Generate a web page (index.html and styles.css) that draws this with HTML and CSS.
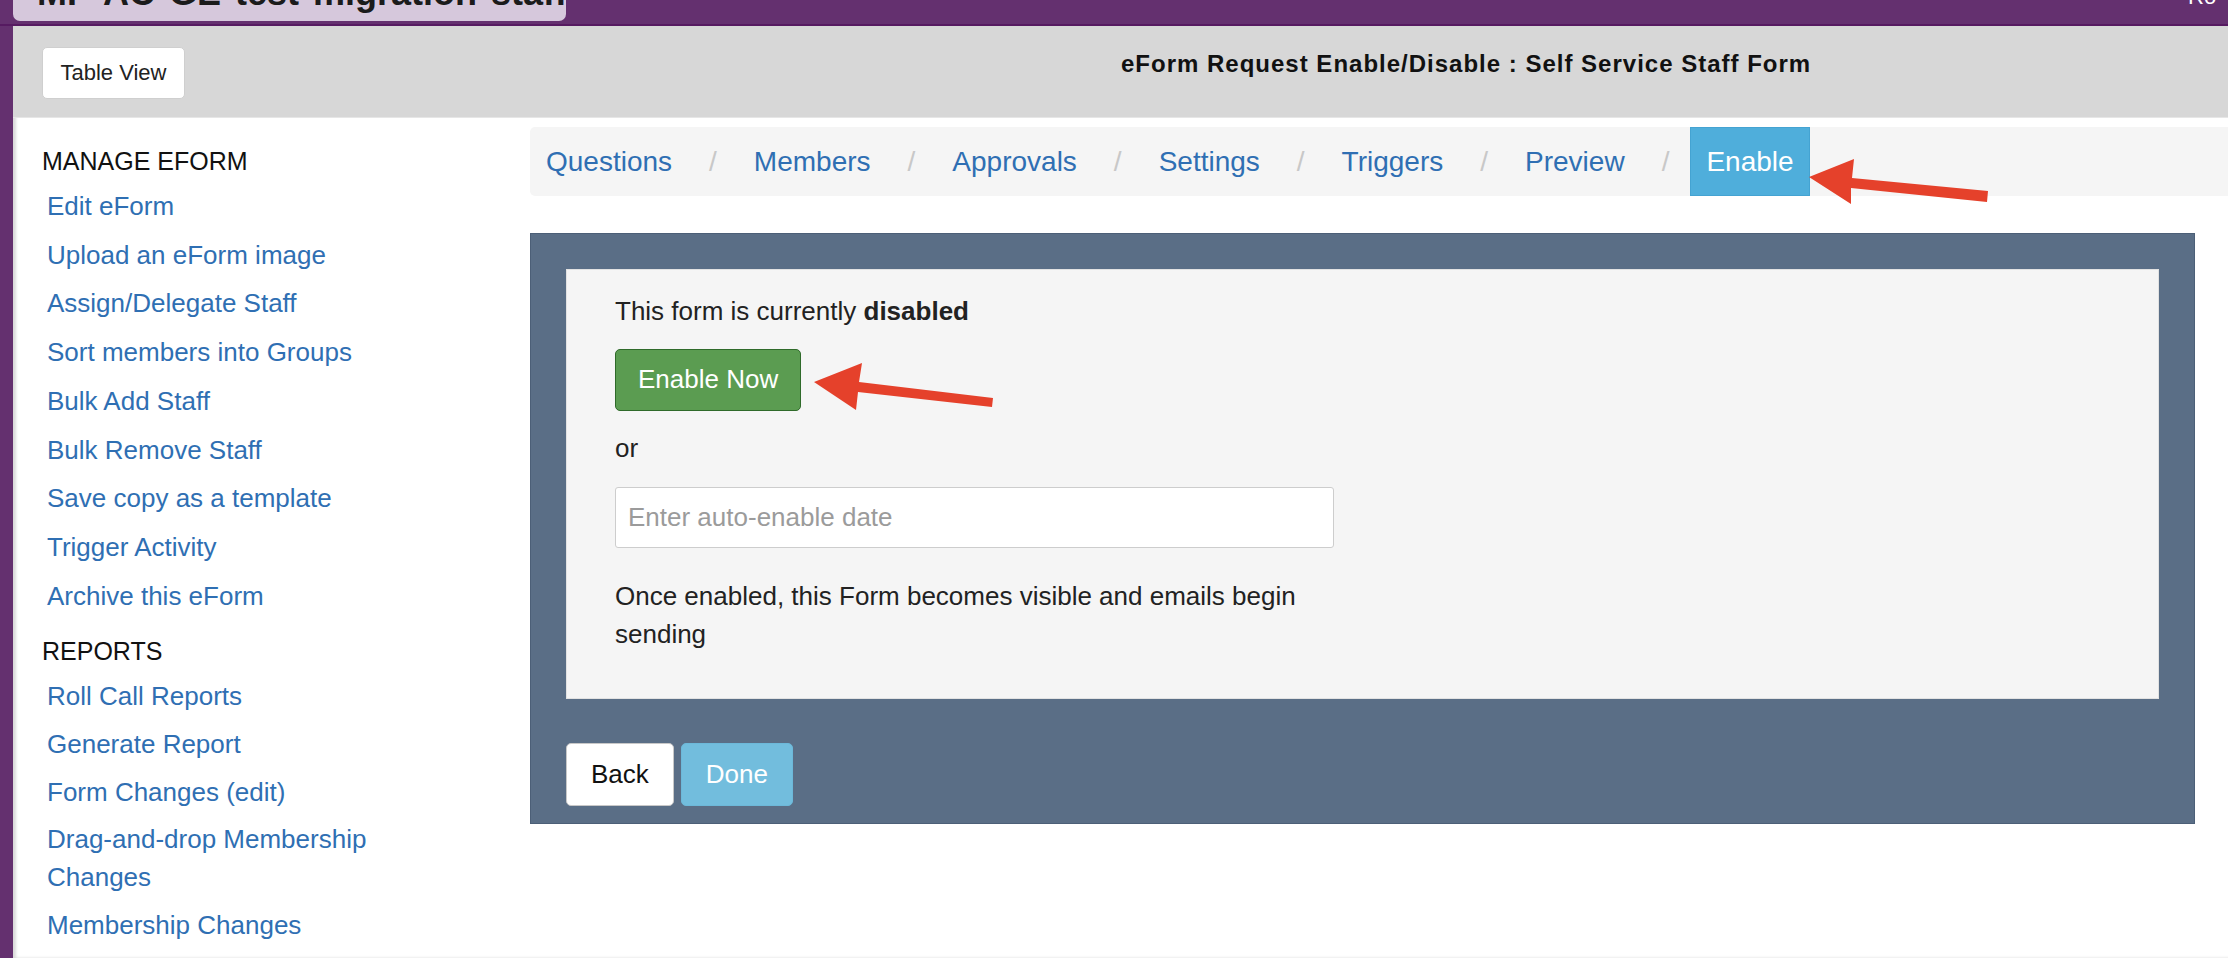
FILE: index.html
```html
<!DOCTYPE html>
<html lang="en">
<head>
    <meta charset="UTF-8">
    <meta name="viewport" content="width=device-width, initial-scale=1.0">
    <title>eForm Request Enable/Disable</title>
    <link rel="stylesheet" href="styles.css">
</head>
<body>
<div class="topbar">
  <div class="site-tab"><span>MP AC GE test migration staff</span></div>
  <div class="user-name"><span>Ro</span></div>
</div>
<div class="page">
  <div class="header">
    <button class="btn table-view">Table View</button>
    <h1 class="title">eForm Request Enable/Disable : Self Service Staff Form</h1>
  </div>
  <div class="content">
    <div class="sidebar">
      <h4>MANAGE EFORM</h4>
      <ul class="side-links">
        <li><a href="#">Edit eForm</a></li>
        <li><a href="#">Upload an eForm image</a></li>
        <li><a href="#">Assign/Delegate Staff</a></li>
        <li><a href="#">Sort members into Groups</a></li>
        <li><a href="#">Bulk Add Staff</a></li>
        <li><a href="#">Bulk Remove Staff</a></li>
        <li><a href="#">Save copy as a template</a></li>
        <li><a href="#">Trigger Activity</a></li>
        <li><a href="#">Archive this eForm</a></li>
      </ul>
      <h4 class="reports">REPORTS</h4>
      <ul class="side-links report-links">
        <li><a href="#">Roll Call Reports</a></li>
        <li><a href="#">Generate Report</a></li>
        <li><a href="#">Form Changes (edit)</a></li>
        <li><a href="#">Drag-and-drop Membership Changes</a></li>
        <li><a href="#">Membership Changes</a></li>
      </ul>
    </div>
    <div class="main">
      <div class="crumbs">
        <a href="#">Questions</a><span class="sep">/</span>
        <a href="#">Members</a><span class="sep">/</span>
        <a href="#">Approvals</a><span class="sep">/</span>
        <a href="#">Settings</a><span class="sep">/</span>
        <a href="#">Triggers</a><span class="sep">/</span>
        <a href="#">Preview</a><span class="sep">/</span>
        <a href="#" class="active">Enable</a>
      </div>
      <div class="panel">
        <div class="well">
          <div class="form-col">
            <p>This form is currently <b>disabled</b></p>
            <button class="btn enable-now">Enable Now</button>
            <p class="or">or</p>
            <input class="date-input" type="text" placeholder="Enter auto-enable date">
            <p class="note">Once enabled, this Form becomes visible and emails begin sending</p>
          </div>
        </div>
        <div class="actions">
          <button class="btn back">Back</button>
          <button class="btn done">Done</button>
        </div>
      </div>
    </div>
  </div>
</div>
<svg class="arrows" width="2228" height="958" viewBox="0 0 2228 958">
  <polygon points="1809,177 1854,159 1852,178 1988,191 1987,202 1851,188 1851,204" />
  <polygon points="814,382 862,363 859,382 993,398 992,407 858,392 856,410" />
</svg>
</body>
</html>
```

FILE: styles.css
```css
html, body{
  height: 100%;
}
body{
  margin: 0;
  font-family: "Liberation Sans", Arial, Helvetica, sans-serif;
  background: #64306f;
  overflow: hidden;
  position: relative;
}

.topbar{
  height: 24px;
  border-bottom: 2px solid #561a61;
  display: flex;
  justify-content: space-between;
  padding-left: 13px;
}
.site-tab{
  width: 553px;
  height: 21px;
  background: #d6c8dc;
  border-radius: 0 0 7px 7px;
  overflow: hidden;
}
.site-tab span{
  display: block;
  margin: -25px 0 0 24px;
  font-size: 36px;
  line-height: 36px;
  font-weight: bold;
  word-spacing: 4px;
  color: #1b1b1b;
  white-space: nowrap;
}
.user-name{
  width: 40px;
  height: 10px;
  overflow: hidden;
}
.user-name span{
  display: block;
  margin-top: -14px;
  font-size: 22px;
  line-height: 22px;
  color: #fff;
}

.page{
  margin-left: 13px;
  background: #fff;
  height: calc(100% - 26px);
  box-shadow: inset 3px 0 3px rgba(0,0,0,0.15);
}

.header{
  height: 92px;
  background: #d7d7d7;
  display: flex;
  align-items: flex-start;
  padding: 21px 0 0 29px;
  box-sizing: border-box;
  border-bottom: 1px solid #e6e6e6;
}
.btn{
  font-family: inherit;
  cursor: pointer;
  border-radius: 5px;
}
.table-view{
  width: 143px;
  height: 52px;
  background: #fff;
  border: 1px solid #cfcfcf;
  font-size: 22px;
  color: #222;
}
.title{
  margin: 3px 0 0 936px;
  font-size: 24px;
  letter-spacing: 1px;
  font-weight: bold;
  color: #111;
  white-space: nowrap;
}

.content{
  display: flex;
}
.sidebar{
  width: 517px;
  flex-shrink: 0;
  box-sizing: border-box;
  padding: 25px 80px 0 29px;
}
.sidebar h4{
  margin: 0 0 3px;
  font-size: 25px;
  line-height: 36px;
  font-weight: normal;
  color: #111;
}
.sidebar h4.reports{
  margin-top: 13px;
}
.side-links{
  list-style: none;
  margin: 0;
  padding: 0;
}
.side-links li{
  padding: 6.1px 0 6.1px 5px;
  font-size: 26px;
  line-height: 36.5px;
}
.report-links li{
  padding: 4.9px 0 4.9px 5px;
  line-height: 38px;
}
.side-links a{
  color: #2f6fb3;
  text-decoration: none;
}

.main{
  flex: 1;
  padding-top: 9px;
}
.crumbs{
  height: 69px;
  background: #f5f5f5;
  border-radius: 5px 0 0 5px;
  display: flex;
  align-items: center;
  font-size: 28px;
}
.crumbs a{
  color: #2f6fb3;
  text-decoration: none;
  padding: 0 16px;
  height: 69px;
  line-height: 69px;
}
.crumbs a.active{
  background: #4faedb;
  color: #fff;
  box-shadow: inset 0 0 0 1px #44a3d2;
}
.crumbs .sep{
  color: #c8c8c8;
  margin: 0 21px;
}

.panel{
  margin: 37px 33px 0 0;
  background: #5a6e86;
  border: 1px solid #4c5f77;
  padding: 35px 35px 17px;
}
.well{
  background: #f5f5f5;
  border: 1px solid #e2e2e2;
  padding: 23px 0 44px 48px;
}
.form-col{
  width: 719px;
  font-size: 26px;
  color: #222;
}
.form-col p{
  margin: 0;
  line-height: 37px;
}
.enable-now{
  display: block;
  margin-top: 18.5px;
  height: 62px;
  padding: 0 22px;
  background: #5b9c51;
  border: 1px solid #2f6a2a;
  color: #fff;
  font-size: 26px;
}
.form-col p.or{
  margin-top: 19.5px;
}
.date-input{
  display: block;
  margin-top: 19.5px;
  width: 719px;
  height: 61px;
  box-sizing: border-box;
  border: 1px solid #cdcdcd;
  border-radius: 3px;
  padding: 0 12px;
  font-family: inherit;
  font-size: 26px;
  background: #fff;
}
.date-input::placeholder{
  color: #9b9b9b;
}
.form-col p.note{
  margin-top: 29px;
  line-height: 38.5px;
}

.actions{
  display: flex;
  gap: 7px;
  margin-top: 44px;
}
.back, .done{
  height: 63px;
  padding: 0 24px;
  font-size: 26px;
}
.back{
  background: #fff;
  border: 1px solid #c8c8c8;
  color: #111;
}
.done{
  background: #72bddd;
  border: 1px solid #6cb8d9;
  color: #fff;
}

.arrows{
  position: absolute;
  left: 0;
  top: 0;
  pointer-events: none;
}
.arrows polygon{
  fill: #e5412b;
}
```
